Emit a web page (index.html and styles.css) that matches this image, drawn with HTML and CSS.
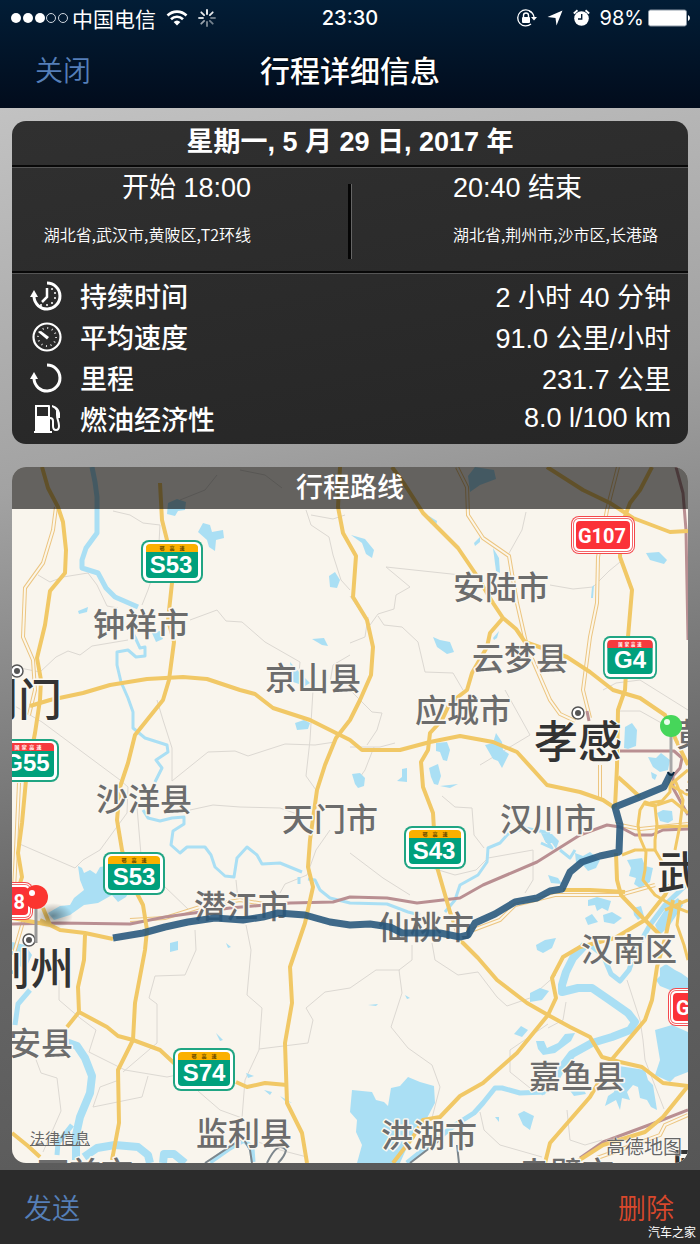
FILE: index.html
```html
<!DOCTYPE html>
<html lang="zh-CN">
<head>
    <meta charset="utf-8">
    <meta name="viewport" content="width=device-width, initial-scale=1">
    <title>行程详细信息</title>
    <link rel="stylesheet" href="styles.css">
</head>
<body>
    <header class="top">
        <div class="status">
            <div class="status-left">
                <svg class="signal" width="58" height="12" viewBox="0 0 58 12">
                    <g fill="#fff"><circle cx="6" cy="6" r="5"/><circle cx="18" cy="6" r="5"/><circle cx="30" cy="6" r="5"/></g>
                    <g fill="none" stroke="#cfd6de"><circle cx="41" cy="6" r="4.500"/><circle cx="53" cy="6" r="4.500"/></g>
                </svg>
                <span class="carrier">中国电信</span>
                <svg class="wifi" width="22" height="16" viewBox="0 0 22 16" fill="none" stroke="#fff" stroke-width="2.600">
                    <path d="M1.500 5.500 A13.500 13.500 0 0 1 20.500 5.500"/>
                    <path d="M5 9.200 A8.600 8.600 0 0 1 17 9.200"/>
                    <path d="M11 15.600 L7.600 12 A5 5 0 0 1 14.400 12 Z" fill="#fff" stroke="none"/>
                </svg>
                <svg width="18" height="18" viewBox="0 0 18 18" stroke="#fff" stroke-width="1.800" stroke-linecap="round">
                    <path d="M9 1v4"/>
                    <path d="M14.700 3.300l-2.800 2.800" opacity=".9"/>
                    <path d="M17 9h-4" opacity=".4"/>
                    <path d="M14.700 14.700l-2.800-2.800" opacity=".45"/>
                    <path d="M9 17v-4" opacity=".5"/>
                    <path d="M3.300 14.700l2.800-2.800" opacity=".6"/>
                    <path d="M1 9h4" opacity=".8"/>
                    <path d="M3.300 3.300l2.800 2.800" opacity=".9"/>
                </svg>
            </div>
            <span class="clock">23:30</span>
            <div class="status-right">
                <svg width="20" height="18" viewBox="0 0 20 18">
                    <path d="M14.500 3.400 A8 8 0 1 0 14 15" fill="none" stroke="#fff" stroke-width="1.300"/>
                    <path d="M12 1.800 A8 8 0 0 1 17 8" fill="none" stroke="#fff" stroke-width="1.300"/>
                    <path d="M14 8h6l-3 3.600z" fill="#fff"/>
                    <rect x="5" y="8" width="8" height="6" rx="1" fill="#fff"/>
                    <path d="M6.500 8V6.500a2.500 2.500 0 0 1 5 0V8" fill="none" stroke="#fff" stroke-width="1.400"/>
                </svg>
                <svg width="16" height="16" viewBox="0 0 16 16"><path d="M15.500 0.500 L9.500 15.500 L8.500 8 L0.500 7 Z" fill="#fff"/></svg>
                <svg width="17" height="18" viewBox="0 0 17 18">
                    <circle cx="8.500" cy="9.500" r="7.300" fill="#fff"/>
                    <path d="M0.800 4.500 L4.500 1.300 M16.200 4.500 L12.500 1.300" stroke="#fff" stroke-width="1.800"/>
                    <path d="M8.700 5v5H5" fill="none" stroke="#031a30" stroke-width="1.400"/>
                </svg>
                <span class="percent">98%</span>
                <svg width="42" height="18" viewBox="0 0 42 18">
                    <rect x="0.500" y="1" width="38" height="16" rx="2" fill="#fff" stroke="#8d99a6"/>
                    <path d="M40 6q2 1 2 3t-2 3z" fill="#fff"/>
                </svg>
            </div>
        </div>
        <nav class="nav">
            <button class="link close" type="button">关闭</button>
            <h1>行程详细信息</h1>
        </nav>
    </header>

    <main class="content">
        <section class="card">
            <h2 class="date">星期一, 5 月 29 日, 2017 年</h2>
            <div class="ends">
                <div class="end start">
                    <p class="time">开始 18:00</p>
                    <p class="place">湖北省,武汉市,黄陂区,T2环线</p>
                </div>
                <div class="divider"></div>
                <div class="end">
                    <p class="time">20:40 结束</p>
                    <p class="place">湖北省,荆州市,沙市区,长港路</p>
                </div>
            </div>
            <dl class="stats">
                <div class="stat">
                    <svg class="icon" viewBox="0 0 32 32">
                        <path d="M17 3 A13 13 0 1 1 4 17" fill="none" stroke="#fff" stroke-width="3"/>
                        <path d="M0 17 L4 10 L8 17 Z" fill="#fff"/>
                        <path d="M17 8v9l-5 5" fill="none" stroke="#fff" stroke-width="2.500"/>
                        <g fill="#fff"><circle cx="22" cy="9" r="1"/><circle cx="25" cy="13" r="1"/><circle cx="25" cy="18" r="1"/><circle cx="22" cy="23" r="1"/><circle cx="17" cy="25" r="1"/><circle cx="11" cy="25" r="1"/></g>
                    </svg>
                    <dt>持续时间</dt>
                    <dd>2 小时 40 分钟</dd>
                </div>
                <div class="stat">
                    <svg class="icon" viewBox="0 0 32 32">
                        <circle cx="17" cy="16" r="13.500" fill="none" stroke="#fff" stroke-width="2.200"/>
                        <circle cx="17" cy="16" r="9" fill="none" stroke="#ddd" stroke-width="2" stroke-dasharray="1 3.710"/>
                        <path d="M8 11 L11 10 L19 16 L17 18.500 Z" fill="#fff"/>
                    </svg>
                    <dt>平均速度</dt>
                    <dd>91.0 公里/小时</dd>
                </div>
                <div class="stat">
                    <svg class="icon" viewBox="0 0 32 32">
                        <path d="M17 3 A13 13 0 1 1 4 17" fill="none" stroke="#fff" stroke-width="3"/>
                        <path d="M0 17 L4 10 L8 17 Z" fill="#fff"/>
                    </svg>
                    <dt>里程</dt>
                    <dd>231.7 公里</dd>
                </div>
                <div class="stat">
                    <svg class="icon" viewBox="0 0 32 32">
                        <path fill-rule="evenodd" d="M5 2h14q1 0 1 1v25h2v2H4v-2h1zM7 4v9h11V4z" fill="#fff"/>
                        <path d="M20 15q3 0 3 3v5q0 4 3 4t3-4c0-5-2-6-2-11V8" fill="none" stroke="#fff" stroke-width="2"/>
                        <path d="M22 2q7 2 8 8v5h-3V9q-2-4-5-5z" fill="#fff"/>
                    </svg>
                    <dt>燃油经济性</dt>
                    <dd>8.0 l/100 km</dd>
                </div>
            </dl>
        </section>

        <section class="map">
            <svg class="map-canvas" viewBox="12 467 676 696">
                <defs>
                    <g id="shield-s">
                        <rect width="62" height="43" rx="8" fill="#20a583"/>
                        <rect x="2" y="2" width="58" height="39" rx="6" fill="#fff"/>
                        <rect x="5" y="5" width="52" height="33" rx="4" fill="#00a07c"/>
                        <path d="M5 12V8q0-4 4-4h44q4 0 4 4v4z" fill="#fbb000"/>
                        <text class="tiny brown" x="31" y="10">鄂　高　速</text>
                    </g>
                    <g id="shield-g">
                        <rect width="62" height="43" rx="8" fill="#20a583"/>
                        <rect x="2" y="2" width="58" height="39" rx="6" fill="#fff"/>
                        <rect x="5" y="5" width="52" height="33" rx="4" fill="#00a07c"/>
                        <path d="M5 12V8q0-4 4-4h44q4 0 4 4v4z" fill="#f63a3d"/>
                        <text class="tiny" x="31" y="10">国&#160;&#160;家&#160;&#160;高&#160;&#160;速</text>
                    </g>
                    <g id="shield-red">
                        <rect width="64" height="38" rx="8" fill="#f4484c"/>
                        <rect x="1" y="1" width="62" height="36" rx="7" fill="#fff"/>
                        <rect x="2" y="2" width="60" height="34" rx="6" fill="#f4686a"/>
                        <rect x="3" y="3" width="58" height="32" rx="5" fill="#fff"/>
                        <rect x="5" y="5" width="54" height="28" rx="4" fill="#fb3238"/>
                    </g>
                    <g id="town">
                        <circle r="6" fill="#fff" stroke="#555" stroke-width="1.500"/>
                        <circle r="3" fill="#555"/>
                    </g>
                    <radialGradient id="pin-shadow">
                        <stop offset="0" stop-color="#000" stop-opacity=".4"/>
                        <stop offset="1" stop-color="#000" stop-opacity="0"/>
                    </radialGradient>
                </defs>

                <!-- district borders -->
                <g class="border">
                    <path d="M113 511 L130 515 L143 523 L160 525 M160 525 L158 560 L148 590 L142 605"/>
                    <path d="M38 575 L50 582 L63 577 L88 573 L97 585 L107 606 L118 608"/>
                    <path d="M128 640 L92 646 L80 655 L68 651 L56 657 L40 672 L20 668"/>
                    <path d="M190 620 L217 610 L226 621 L242 622 L265 642 L300 662 L298 683"/>
                    <path d="M306 510 L311 525 L329 537 L333 555 L341 580 L350 590 M311 515 L333 519 L345 515"/>
                    <path d="M180 500 L205 490 L217 475 M240 470 L265 475 L282 488"/>
                    <path d="M526 512 L522 530 L508 555 M386 567 L470 576 M386 567 L410 587 L396 595 L394 609 L378 614 L370 625 L350 596"/>
                    <path d="M550 585 L573 589 L593 587 L609 571 L620 562"/>
                    <path d="M378 616 L384 625 L402 627 L418 642 L425 672 L453 673 L463 690"/>
                    <path d="M350 643 L365 637 L368 617 M350 655 L333 665 L330 683"/>
                    <path d="M13 705 L42 722 L120 780 L128 787 L127 813 L100 850 L83 860 L75 868 L15 842"/>
                    <path d="M157 700 L163 720 L172 748 L172 781 L208 752 L235 751 L248 756 L285 744 L315 745 L335 742"/>
                    <path d="M313 690 L310 740 L306 776 L316 790 M136 795 L142 867 M190 810 L213 805 L240 807 L280 808 L300 815"/>
                    <path d="M163 885 L190 911 L205 917 M236 880 L238 900 M280 893 L285 884 L307 875 L316 850 L330 830"/>
                    <path d="M350 747 L380 747 L395 743 M350 690 L372 712 L382 713 L377 730 L367 745"/>
                    <path d="M374 747 L365 770 L358 780 M442 796 L455 807 L472 808 L474 835 L484 848"/>
                    <path d="M350 853 L383 878 L410 895 M422 865 L455 875 L476 870 L488 858 L533 850 L533 880 L525 893"/>
                    <path d="M505 690 L530 735 L480 765 M618 711 L640 711 L665 725 L690 735 M603 690 L616 683 L640 680 L688 710"/>
                    <path d="M59 980 L59 1000 L80 1018 L96 1030 L89 1052 L125 1070 L167 1077 L182 1074"/>
                    <path d="M195 930 L196 950 L185 975 L155 976 L149 998 L157 1004 L157 1043 L123 1072"/>
                    <path d="M246 925 L251 950 L247 995 L262 1008 L259 1050 L245 1080 L242 1118"/>
                    <path d="M259 1049 L308 1043 L313 1020 L306 1008 L325 992 L350 988 L376 970 L400 970"/>
                    <path d="M412 945 L412 960 L399 970 L402 993 L391 1027 L408 1048 L432 1065 L440 1087 L432 1118"/>
                    <path d="M432 943 L435 960 L458 975 L478 972 L497 997 L507 1006 L530 998 L556 975"/>
                    <path d="M35 1057 L41 1073 L57 1078 L61 1111 L43 1152 M148 1076 L142 1097 L93 1107 L100 1087 L119 1080"/>
                    <path d="M198 1091 L220 1110 L242 1118 M253 1140 L280 1150 L307 1157"/>
                    <path d="M548 1024 L510 1050 L510 1072 L530 1088 M566 1002 L563 1020 L548 1028 M627 980 L640 1020 L643 1040 L645 1060 L664 1109"/>
                    <path d="M480 1112 L484 1130 L500 1145 L542 1157 M567 1110 L570 1140 L585 1145 L602 1140"/>
                </g>

                <!-- lakes -->
                <g class="lake">
                    <path d="M168 503 L177 499 L186 502 L185 510 L178 511 L175 516 L167 514 Z"/>
                    <path d="M198 532 L203 523 L210 525 L212 532 L223 530 L224 538 L216 540 L215 551 L209 547 L207 540 Z"/>
                    <path d="M329 576 L335 572 L340 580 L337 588 L330 587 Z"/>
                    <path d="M78 611 L88 607 L87 612 L79 614 Z"/>
                    <path d="M152 633 L160 631 L163 639 L156 642 Z"/>
                    <path d="M312 639 L324 638 L328 646 L322 645 Z"/>
                    <path d="M290 662 L299 672 L310 683 L305 686 L293 682 Z"/>
                    <path d="M295 723 L304 720 L310 723 L308 729 L297 730 Z"/>
                    <path d="M351 535 L365 539 L374 550 L372 558 L366 554 L362 543 Z"/>
                    <path d="M468 476 L475 467 L494 470 L496 479 L480 485 L470 492 Z"/>
                    <path d="M429 516 L437 521 L436 526 L430 523 Z"/>
                    <path d="M474 543 L480 537 L480 542 L475 546 Z"/>
                    <path d="M493 548 L499 558 L500 573 L496 571 Z"/>
                    <path d="M433 637 L440 640 L450 642 L454 652 L447 654 L437 647 Z"/>
                    <path d="M493 638 L499 631 L497 638 L494 640 Z"/>
                    <path d="M592 587 L594 585 L593 598 L591 598 Z"/>
                    <path d="M646 553 L659 552 L667 560 L664 564 L650 560 Z"/>
                    <path d="M352 774 L360 773 L365 778 L364 786 L358 788 L355 784 Z"/>
                    <path d="M397 781 L402 777 L402 769 L407 768 L407 782 Z"/>
                    <path d="M436 743 L447 742 L450 750 L447 761 L443 760 L440 752 L436 751 Z"/>
                    <path d="M429 768 L438 764 L441 776 L438 785 L434 784 L431 777 Z"/>
                    <path d="M440 786 L458 784 L450 788 Z"/>
                    <path d="M485 745 L493 743 L496 733 L502 742 L503 750 L509 754 L502 768 L498 761 L493 759 Z"/>
                    <path d="M624 748 L625 727 L632 723 L637 730 L636 746 L628 749 Z"/>
                    <path d="M648 757 L656 758 L661 753 L670 760 L668 770 L660 772 L653 767 Z"/>
                    <path d="M651 772 L657 775 L655 780 L652 778 Z"/>
                    <path d="M657 813 L663 810 L672 811 L673 820 L668 823 L660 821 Z"/>
                    <path d="M541 833 L552 834 L559 841 L556 849 L552 843 L546 843 Z"/>
                    <path d="M575 853 L583 856 L590 852 L600 860 L596 868 L588 871 L583 865 L576 862 Z"/>
                    <path d="M627 860 L642 858 L645 866 L653 868 L650 882 L640 888 L634 884 L636 878 L629 876 L631 868 Z"/>
                    <path d="M588 900 L597 897 L611 901 L608 911 L602 908 L597 911 L595 905 L588 906 Z"/>
                    <path d="M585 918 L592 914 L598 922 L588 925 Z"/>
                    <path d="M603 915 L612 912 L622 918 L614 924 L604 922 Z"/>
                    <path d="M548 875 L558 878 L562 884 L551 883 Z"/>
                    <path d="M633 908 L641 906 L644 916 L638 920 L634 915 Z"/>
                    <path d="M78 866 L82 868 L84 873 L90 870 L96 874 L100 867 L106 866 L112 880 L130 890 L126 897 L118 902 L112 895 L98 903 L84 905 L70 915 L54 920 L48 913 L60 906 L70 905 L74 898 L84 890 L80 880 Z"/>
                    <path d="M12 942 L25 945 L32 955 L25 970 L12 960 Z"/>
                    <path d="M170 943 L178 941 L178 950 L170 952 Z"/>
                    <path d="M226 943 L231 947 L228 948 Z"/>
                    <path d="M216 1033 L223 1040 L220 1041 Z"/>
                    <path d="M246 1073 L254 1076 L248 1078 Z"/>
                    <path d="M264 1090 L272 1092 L270 1095 Z M280 1096 L292 1103 L285 1101 Z"/>
                    <path d="M368 1005 L378 1004 L376 1006 Z M405 995 L410 998 L407 999 Z"/>
                    <path d="M536 945 L545 940 L556 938 L552 948 L543 953 L537 950 Z"/>
                    <path d="M530 993 L540 988 L549 991 L542 1000 L530 1002 Z"/>
                    <path d="M514 1034 L521 1026 L528 1030 L522 1037 Z"/>
                    <path d="M536 1041 L544 1041 L547 1048 L558 1043 L565 1034 L575 1033 L571 1041 L555 1053 L543 1055 L538 1049 Z"/>
                    <path d="M352 1090 L372 1092 L376 1100 L384 1102 L388 1106 L391 1088 L400 1086 L408 1077 L420 1082 L434 1086 L435 1103 L427 1118 L414 1132 L408 1145 L400 1163 L357 1163 L362 1145 L356 1132 L357 1120 L350 1112 Z"/>
                    <path d="M495 1117 L499 1117 L499 1122 Z M518 1114 L524 1111 L534 1116 L530 1130 L523 1125 Z"/>
                    <path d="M656 980 L660 976 L660 968 L666 964 L675 970 L681 973 L688 978 L688 991 L670 990 L660 986 Z"/>
                    <path d="M655 1030 L672 1025 L688 1032 L688 1072 L675 1077 L670 1082 L655 1075 L660 1060 Z"/>
                    <path d="M619 1066 L645 1070 L648 1080 L653 1085 L657 1110 L651 1107 L647 1100 L640 1098 L638 1087 L633 1085 L627 1092 L630 1100 L622 1098 L620 1110 L616 1100 L605 1106 L608 1096 L614 1092 Z"/>
                    <path d="M568 1088 L582 1086 L586 1094 L574 1096 Z"/>
                    <path d="M655 925 L668 905 L678 898 L683 905 L670 925 L660 935 Z"/>
                </g>

                <!-- rivers -->
                <g class="river">
                    <path class="mid" d="M92 467 L95 482 L97 497 L97 533 L86 548 L82 560 L82 568 L98 573 L106 588 L115 597 L138 607"/>
                    <path d="M134 635 L140 648 L145 647 L145 656 L136 657 L128 650 L117 652 L117 665 L121 682 L128 698 L133 712 L133 728 L145 738 L167 745 L168 752 L156 760 L162 768 L155 782"/>
                    <path d="M143 810 L148 818 L160 821 L172 818 L184 817 L184 824 L173 831 L171 845 L180 853 L187 847 L205 847 L211 855 L215 867 L225 876 L234 877 L237 858 L247 847 L257 855 L262 864 L280 863 L302 872"/>
                    <path d="M299 877 L299 884 M308 879 L315 880 L320 890 L330 898 L350 903 L387 904 L408 912 L420 915"/>
                    <path d="M445 912 L455 900 L460 885 L478 875 L487 862 L488 848 L500 843 L508 834 L525 828 L550 833"/>
                    <path class="wide" d="M66 1042 L77 1046 L85 1058 L92 1076 L90 1093 L80 1117 L76 1135 L76 1160"/>
                    <path class="wide" d="M84 1157 L97 1148 L115 1145 L138 1147 L148 1155 L150 1163"/>
                    <path class="mid" d="M57 1155 L58 1143 L72 1125"/>
                    <path class="wide" d="M163 1163 L164 1154 L174 1154 L185 1163"/>
                    <path class="mid" d="M30 990 L18 1004 L15 1025"/>
                    <path class="wide" d="M585 945 L573 958 L566 972 L562 985 L562 992 L578 988 L592 988 L608 999 L628 1013 L635 1022 L630 1030 L612 1037 L592 1043 L572 1054 L560 1070 L552 1085 L540 1092"/>
                    <path class="mid" d="M545 1092 L520 1093 L502 1088 L495 1088 L483 1103 L474 1113 L455 1125 L428 1146 L407 1163"/>
                    <path class="mid" d="M590 945 L603 955 L611 974 L620 981 L629 970 L636 950 L650 925 L665 905 L686 885"/>
                    <path class="mid" d="M210 1162 L230 1148 L244 1140 L252 1148 L253 1162"/>
                    <path d="M541 843 L552 848 L545 838 M560 850 L570 858 L575 850"/>
                </g>

                <!-- double line roads, cased in yellow -->
                <g class="minor-case">
                    <path d="M56 507 L53 530 L43 563 L25 588 L23 637 L33 660 L35 690 L29 715"/>
                    <path d="M19 783 L16 850 L14 890 L25 915 L12 960"/>
                    <path d="M457 467 L467 487 L468 515 L483 538 L509 556 L517 603 L527 647 L550 700 L560 714 L575 721"/>
                    <path d="M618 467 L607 510 L598 557 L597 603 L590 637 L583 690 L590 718"/>
                    <path d="M600 765 L600 800 M615 824 L640 829 L688 824"/>
                    <path d="M130 920 L165 918 L200 907 L240 900 L270 905"/>
                    <path d="M473 930 L500 920 L515 905 L555 895 L620 895 L655 885"/>
                    <path d="M597 1158 L625 1148 L660 1135 L665 1125 L688 1115"/>
                </g>
                <g class="minor-core">
                    <path d="M56 507 L53 530 L43 563 L25 588 L23 637 L33 660 L35 690 L29 715"/>
                    <path d="M19 783 L16 850 L14 890 L25 915 L12 960"/>
                    <path d="M457 467 L467 487 L468 515 L483 538 L509 556 L517 603 L527 647 L550 700 L560 714 L575 721"/>
                    <path d="M618 467 L607 510 L598 557 L597 603 L590 637 L583 690 L590 718"/>
                    <path d="M600 765 L600 800 M615 824 L640 829 L688 824"/>
                    <path d="M130 920 L165 918 L200 907 L240 900 L270 905"/>
                    <path d="M473 930 L500 920 L515 905 L555 895 L620 895 L655 885"/>
                    <path d="M597 1158 L625 1148 L660 1135 L665 1125 L688 1115"/>
                </g>

                <!-- railways -->
                <g class="rail">
                    <path d="M12 924 L60 923 L130 924 L165 917 L230 908 L290 903 L333 902 L350 897 L387 898 L417 903 L460 898 L483 885 L537 862 L580 835 L607 825 L620 827 L635 835 L652 835 L663 830 L688 829"/>
                    <path d="M620 751 L674 751 L682 758 L680 768 L673 776 L673 788 L688 815"/>
                    <path d="M676 467 L683 493 L686 530 L688 640"/>
                    <path d="M580 1158 L603 1142 L657 1122 L688 1110"/>
                    <path d="M587 711 L589 721"/>
                </g>

                <!-- highways -->
                <g class="road">
                    <path d="M42 467 L48 488 L58 507 L63 522 L66 550 L65 573 L50 591 L45 625 L37 658 L41 680 L40 700 L35 733 L26 780 L22 823 L18 853 L22 877 L17 893"/>
                    <path d="M160 483 L162 520 L167 540 L172 583 L168 620 L174 642 L169 680 L163 700 L147 720 L135 735 L128 763 L120 787 L117 820 L122 850 L130 880 L143 905 L147 930 L145 950 L135 1003 L133 1040 L118 1070 L119 1123 L112 1160"/>
                    <path d="M30 706 L50 700 L83 693 L110 685 L147 679 L183 677 L207 679 L240 690 L255 694 L273 708 L310 720 L350 740 L362 750 L400 750 L430 742 L460 736 L493 742 L517 752 L547 785 L580 792 L603 800 L615 808"/>
                    <path d="M340 467 L338 507 L343 533 L356 556 L353 597 L367 620 L373 647 L371 675 L360 700 L350 720 L336 738 L325 765 L317 790 L310 840 L308 867 L313 887 L305 923 L290 967 L292 1003 L285 1043 L287 1103 L302 1133 L307 1163"/>
                    <path d="M392 467 L405 485 L423 513 L440 530 L458 548 L475 573 L493 603 L503 618 L516 629 L525 642 L545 649 L567 657 L590 672 L613 690 L640 698 L665 715 L676 740 L688 765"/>
                    <path d="M503 618 L490 633 L487 647 L472 673 L467 690 L450 703 L442 720 L430 733 L428 750 L421 762 L423 787 L433 813 L434 830 L437 867 L450 912 L460 940 L478 958 L497 980 L527 1003 L548 1015 L570 1027 L590 1037 L602 1057 L620 1062 L642 1067 L663 1083 L688 1086 L663 1117 L645 1132 L603 1145 L578 1161"/>
                    <path d="M548 1015 L517 1053 L483 1083 L460 1096 L440 1117 L423 1120 L413 1137 L393 1163"/>
                    <path d="M548 1015 L556 998 L552 978 L563 957 L580 947 L615 938 L645 920 L665 895 L670 885"/>
                    <path d="M673 900 L666 935 L657 967 L652 1000 L645 1020 L613 1058 L590 1097 L570 1120 L550 1143 L545 1163"/>
                    <path d="M652 467 L640 490 L630 503 L621 527 L620 557 L632 590 L628 637 L625 690 L618 710 L617 767 L615 807"/>
                    <path d="M547 467 L583 490 L610 503 L633 518 L670 532 L688 531"/>
                    <path d="M85 935 L84 960 L78 987 L79 1012 L107 1027 L118 1036 L133 1040 L160 1050 L175 1064 M236 1082 L247 1087 L265 1083 L287 1085 M79 1012 L67 1027"/>
                    <path d="M40 920 L60 930 L85 933 L113 939 M12 918 L50 925 L43 908"/>
                    <path d="M12 1133 L28 1146 L40 1157"/>
                    <path d="M618 777 L627 785 L640 797 M563 890 L590 890 L625 892"/>
                    <path d="M616 853 L617 880 L621 895 L643 918 L660 935"/>
                </g>
                <!-- city ring roads -->
                <g class="road ring">
                    <path d="M657 806 L645 802 L640 810 L638 825 L640 838 L646 852 L645 870 L643 880 L655 895 L675 907 L688 912"/>
                    <path d="M645 804 L655 806 L657 825 L655 840 L655 850 L635 850 L622 855"/>
                    <path d="M670 775 L670 792 L662 801 L650 803 M675 780 L683 800 L680 825 L675 850 M688 770 L670 785 L688 795 M655 827 L688 826 M655 850 L664 865"/>
                    <path d="M657 805 L672 800 L688 813 M680 900 L677 925 L684 945 L688 960 M665 910 L688 900"/>
                </g>
                <path class="rail-dark" d="M205 1163 L243 1138 L250 1150 L252 1163 M267 1163 Q278 1140 286 1150 Q285 1156 278 1163 M410 1163 L440 1140 M457 1145 L459 1163"/>

                <!-- county names -->
                <g class="county">
                    <text x="141" y="636">钟祥市</text>
                    <text x="313" y="690">京山县</text>
                    <text x="501" y="599">安陆市</text>
                    <text x="520" y="670">云梦县</text>
                    <text x="463" y="722">应城市</text>
                    <text x="144" y="811">沙洋县</text>
                    <text x="330" y="831">天门市</text>
                    <text x="548" y="831">汉川市</text>
                    <text x="242" y="918">潜江市</text>
                    <text x="426" y="939">仙桃市</text>
                    <text x="629" y="961">汉南区</text>
                    <text x="577" y="1088">嘉鱼县</text>
                    <text x="244" y="1145">监利县</text>
                    <text x="429" y="1147">洪湖市</text>
                    <text x="25" y="1055">公安县</text>
                    <text x="85" y="1185">石首市</text>
                    <text x="566" y="1185">赤壁市</text>
                    <text x="724" y="746">黄陂区</text>
                    <text x="732" y="806">青山区</text>
                </g>
                <g class="city">
                    <text x="578" y="758">孝感</text>
                    <text x="18" y="716">荆门</text>
                    <text x="30" y="985">荆州</text>
                    <text x="701" y="889">武汉</text>
                    <text x="714" y="1181">咸宁</text>
                </g>

                <!-- road shields -->
                <g class="shield">
                    <use href="#shield-s" x="141" y="540"/><text x="171" y="573">S53</text>
                    <use href="#shield-s" x="404" y="826"/><text x="434" y="859">S43</text>
                    <use href="#shield-s" x="103" y="852"/><text x="134" y="885">S53</text>
                    <use href="#shield-s" x="173" y="1048"/><text x="204" y="1081">S74</text>
                    <use href="#shield-g" x="-3" y="739"/><text x="27" y="771">G55</text>
                    <svg x="603" y="636" width="54" height="43" viewBox="0 0 62 43" preserveAspectRatio="none"><use href="#shield-g"/></svg><text x="630" y="668">G4</text>
                    <use href="#shield-red" x="571" y="516"/><text class="narrow" x="602" y="543">G107</text>
                    <use href="#shield-red" x="668" y="988"/><text class="narrow" x="700" y="1015">G107</text>
                    <use href="#shield-red" x="-31" y="882"/><text class="narrow" x="1" y="909">G318</text>
                </g>

                <use href="#town" x="578" y="713"/>
                <use href="#town" x="17" y="671"/>
                <use href="#town" x="29" y="940"/>

                <path class="route" d="M113 938 L143 933 L165 927 L188 922 L215 918 L243 920 L263 917 L278 913 L305 915 L330 922 L350 925 L370 924 L390 927 L402 933 L440 933 L460 937 L468 935 L475 923 L495 914 L515 902 L537 898 L550 891 L562 889 L570 872 L582 862 L600 856 L619 852 L620 825 L615 807 L640 797 L664 787 L671 773"/>

                <!-- pins -->
                <g>
                    <ellipse cx="53" cy="916" rx="20" ry="13" fill="url(#pin-shadow)"/>
                    <path d="M36 905v38" stroke="#999" stroke-width="3"/>
                    <circle cx="36" cy="897" r="12" fill="#fb3530"/>
                    <circle cx="32" cy="893" r="3" fill="#fff"/>
                    <path d="M671 735v38" stroke="#a8a8a8" stroke-width="3"/>
                    <path d="M668 772q1 3 3 3t3-3" stroke="#06243c" stroke-width="2" fill="none"/>
                    <circle cx="671" cy="726" r="11" fill="#46d65a"/>
                    <circle cx="667" cy="722" r="3" fill="#eafeec"/>
                </g>
            </svg>
            <h2 class="map-title">行程路线</h2>
            <a class="legal" href="#legal">法律信息</a>
            <span class="provider">高德地图</span>
        </section>
    </main>

    <footer class="toolbar">
        <button class="link" type="button">发送</button>
        <button class="link delete" type="button">删除</button>
        <span class="watermark">汽车之家</span>
    </footer>
</body>
</html>
```
FILE: styles.css
```css
* {
  box-sizing: border-box;
}
body {
  margin: 0;
  min-height: 100vh;
  display: flex;
  flex-direction: column;
  background: #2b2b2b;
  color: #fff;
  font-family: "Liberation Sans", "Noto Sans CJK SC", sans-serif;
}
h1, h2, p, dl, dd {
  margin: 0;
}
svg {
  display: block;
}

.top {
  background: linear-gradient(#021d36, #020c1c);
}
.status {
  display: grid;
  grid-template-columns: 1fr auto 1fr;
  align-items: center;
  height: 35px;
  padding: 0 10px;
  font-size: 20px;
}
.status-left, .status-right {
  display: flex;
  align-items: center;
}
.status-left {
  gap: 10px;
}
.signal {
  margin-right: -6px;
}
.carrier {
  font-family: "Noto Sans CJK SC", sans-serif;
  font-size: 21px;
  line-height: 32px;
}
.status-right {
  justify-content: flex-end;
  gap: 10px;
}
.clock {
  font-family: Inter, sans-serif;
  font-weight: 500;
}
.percent {
  font-family: Inter, sans-serif;
  margin-right: -6px;
}
.nav {
  display: grid;
  grid-template-columns: 1fr auto 1fr;
  align-items: center;
  height: 73px;
  padding: 0 35px 5px;
}
.nav h1 {
  font-size: 30px;
  font-weight: 500;
  text-shadow: 0 -1px 1px #000;
}
.link {
  border: none;
  padding: 0;
  background: none;
  color: #557fb8;
  font-family: "Noto Sans CJK SC", sans-serif;
  font-size: 28px;
  font-weight: 350;
  cursor: pointer;
}
.close {
  justify-self: start;
}

.content {
  display: flex;
  flex-direction: column;
  gap: 23px;
  flex: 1;
  padding: 13px 12px 7px;
  background: linear-gradient(168deg, #c2c2c2, #a2a2a2 32%, #666 68%, #565656);
}
.card {
  border-radius: 14px;
  background: linear-gradient(170deg, #303030, #262626);
}
.date {
  height: 46px;
  line-height: 42px;
  border-bottom: 2px solid #080808;
  text-align: center;
  font-size: 27px;
  font-weight: 700;
}
.ends {
  display: grid;
  grid-template-columns: minmax(0, 1fr) 4px minmax(0, 1fr);
  height: 106px;
  border-top: 1px solid #555;
  border-bottom: 2px solid #080808;
}
.end {
  padding-left: 101px;
}
.start {
  display: flex;
  flex-direction: column;
  align-items: flex-end;
  padding: 0 97px 0 0;
}
.time {
  line-height: 40px;
  font-size: 27px;
}
.place {
  margin-top: 14px;
  line-height: 24px;
  font-family: "Noto Sans CJK SC", sans-serif;
  font-size: 16px;
  font-weight: 350;
  white-space: nowrap;
}
.divider {
  margin: 16px 0 12px;
  background: #050505;
  border-right: 1px solid #666;
}
.stats {
  border-top: 1px solid #555;
  padding: 1px 17px 5px 18px;
}
.stat {
  display: flex;
  align-items: center;
  height: 41px;
  font-size: 27px;
}
.icon {
  width: 32px;
  height: 32px;
  margin-right: 18px;
}
.stat dt {
  font-weight: 500;
}
.stat dd {
  margin-left: auto;
}

.map {
  position: relative;
  overflow: hidden;
  border-radius: 14px;
  background: #f9f5ed;
}
.map-canvas {
  width: 100%;
  height: auto;
}
.map-title {
  position: absolute;
  top: 0;
  left: 0;
  right: 0;
  line-height: 42px;
  background: rgba(0, 0, 0, .6);
  text-align: center;
  font-size: 27px;
  font-weight: 500;
}
.legal {
  position: absolute;
  left: 18px;
  bottom: 12px;
  color: #666;
  font-size: 15px;
  line-height: 24px;
}
.provider {
  position: absolute;
  right: 6px;
  bottom: 2px;
  color: #666;
  font-size: 19px;
  line-height: 26px;
  text-shadow: 0 0 1px #fff, 0 0 2px #fff;
}

/* map drawing */
.border path {
  fill: none;
  stroke: #dcd8d2;
  stroke-width: 1;
}
.lake path {
  fill: #aadff4;
}
.river path {
  fill: none;
  stroke: #aadff4;
  stroke-width: 3;
  stroke-linejoin: round;
}
.river .mid {
  stroke-width: 5;
}
.river .wide {
  stroke-width: 8;
}
.minor-case path {
  fill: none;
  stroke: #ecc581;
  stroke-width: 4;
}
.minor-core path {
  fill: none;
  stroke: #fbf6ea;
  stroke-width: 2;
}
.rail path {
  fill: none;
  stroke: #b98f92;
  stroke-width: 3;
  stroke-linejoin: round;
}
.rail-dark {
  fill: none;
  stroke: #7d868c;
  stroke-width: 2;
}
.road path {
  fill: none;
  stroke: #f1c866;
  stroke-width: 4;
  stroke-linejoin: round;
}
.road.ring path {
  stroke-width: 3;
}
.route {
  fill: none;
  stroke: #24557b;
  stroke-width: 7;
  stroke-linejoin: round;
  opacity: .88;
}
.county text, .city text {
  font-family: "Noto Sans CJK SC", sans-serif;
  font-size: 32px;
  text-anchor: middle;
  fill: #6c6c6c;
  font-weight: 500;
  paint-order: stroke;
  stroke: #faf7f0;
  stroke-width: 3px;
  stroke-linejoin: round;
}
.city text {
  font-size: 44px;
  fill: #333;
}
.shield text {
  font-family: "Liberation Sans", sans-serif;
  font-size: 24px;
  font-weight: 700;
  text-anchor: middle;
  fill: #fff;
}
.shield .narrow {
  font-family: "Liberation Sans Narrow", Roboto, sans-serif;
  font-size: 20px;
}
.shield .tiny, .tiny {
  font-family: "Noto Sans CJK SC", sans-serif;
  font-size: 5px;
  font-weight: 700;
  text-anchor: middle;
  fill: #fff;
}
.brown {
  fill: #5a4200;
}

.toolbar {
  position: relative;
  display: flex;
  justify-content: space-between;
  align-items: center;
  height: 74px;
  padding: 0 26px 0 24px;
}
.delete {
  color: #d9482c;
}
.watermark {
  position: absolute;
  right: 4px;
  bottom: 2px;
  font-size: 12px;
  line-height: 18px;
}
```
